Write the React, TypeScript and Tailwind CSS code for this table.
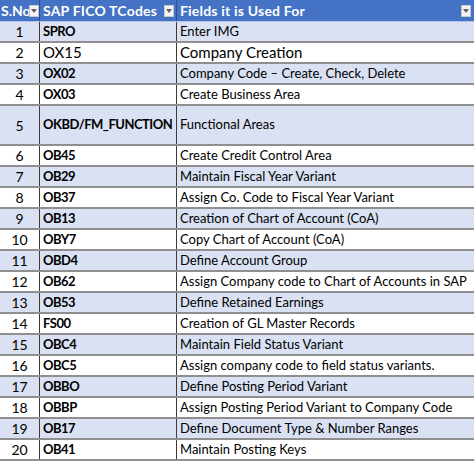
import React from "react";

type Row = { no: number; code: string; desc: string; bold?: boolean; big?: boolean; tall?: boolean };

const rows: Row[] = [
  { no: 1, code: "SPRO", desc: "Enter IMG", bold: true },
  { no: 2, code: "OX15", desc: "Company Creation", big: true },
  { no: 3, code: "OX02", desc: "Company Code – Create, Check, Delete", bold: true },
  { no: 4, code: "OX03", desc: "Create Business Area", bold: true },
  { no: 5, code: "OKBD/FM_FUNCTION", desc: "Functional Areas", bold: true, tall: true },
  { no: 6, code: "OB45", desc: "Create Credit Control Area", bold: true },
  { no: 7, code: "OB29", desc: "Maintain Fiscal Year Variant", bold: true },
  { no: 8, code: "OB37", desc: "Assign Co. Code to Fiscal Year Variant", bold: true },
  { no: 9, code: "OB13", desc: "Creation of Chart of Account (CoA)", bold: true },
  { no: 10, code: "OBY7", desc: "Copy Chart of Account (CoA)", bold: true },
  { no: 11, code: "OBD4", desc: "Define Account Group", bold: true },
  { no: 12, code: "OB62", desc: "Assign Company code to Chart of Accounts in SAP", bold: true },
  { no: 13, code: "OB53", desc: "Define Retained Earnings", bold: true },
  { no: 14, code: "FS00", desc: "Creation of GL Master Records", bold: true },
  { no: 15, code: "OBC4", desc: "Maintain Field Status Variant", bold: true },
  { no: 16, code: "OBC5", desc: "Assign company code to field status variants.", bold: true },
  { no: 17, code: "OBBO", desc: "Define Posting Period Variant", bold: true },
  { no: 18, code: "OBBP", desc: "Assign Posting Period Variant to Company Code", bold: true },
  { no: 19, code: "OB17", desc: "Define Document Type & Number Ranges", bold: true },
  { no: 20, code: "OB41", desc: "Maintain Posting Keys", bold: true },
];

const Filter = () => (
  <span className="flex h-[12px] w-[10px] shrink-0 items-center justify-center border border-[#c8c8c8] bg-[#f4f4f4]">
    <svg width="6" height="4" viewBox="0 0 6 4">
      <path d="M0 0 L6 0 L3 4 Z" fill="#606060" />
    </svg>
  </span>
);

export default function App() {
  return (
    <div className="h-[462px] w-[474px] overflow-hidden bg-white font-['Lato','Liberation_Sans',sans-serif] text-[13px] text-black">
      <div className="flex h-[22px] border-b border-[#b4c6e7] bg-[#4472c4] text-[14px] font-bold tracking-[0.2px] text-white">
        <div className="flex w-[40px] shrink-0 items-center border-r border-[#2f4f8a] pl-[1px]">
          <span className="w-[29px] overflow-hidden whitespace-nowrap tracking-normal">S.No</span>
          <Filter />
        </div>
        <div className="flex w-[137px] shrink-0 items-center justify-between border-r border-[#2f4f8a] pl-[3px] pr-[2px]">
          <span>SAP FICO TCodes</span>
          <Filter />
        </div>
        <div className="flex flex-1 items-center justify-between pl-[3px] pr-[3px]">
          <span>Fields it is Used For</span>
          <Filter />
        </div>
      </div>
      {rows.map((r, i) => (
        <div
          key={r.no}
          className={`flex border-b-2 border-[#8f8f8f] ${r.tall ? "h-[40px]" : "h-[21px]"} ${
            i % 2 === 0 ? "bg-[#d9e1f2]" : "bg-white"
          }`}
        >
          <div className="flex w-[40px] shrink-0 items-center justify-center border-r border-[#3a3a3a] text-[14px]">
            {r.no}
          </div>
          <div
            className={`flex w-[137px] shrink-0 items-center whitespace-nowrap border-r border-[#3a3a3a] pl-[3px] ${
              r.big ? "text-[15px]" : "text-[13px] tracking-[-0.5px]"
            } ${r.bold ? "font-bold" : ""}`}
          >
            {r.code}
          </div>
          <div className={`flex flex-1 items-center whitespace-nowrap pl-[3px] ${r.big ? "text-[15px]" : ""}`}>
            {r.desc}
          </div>
        </div>
      ))}
    </div>
  );
}
